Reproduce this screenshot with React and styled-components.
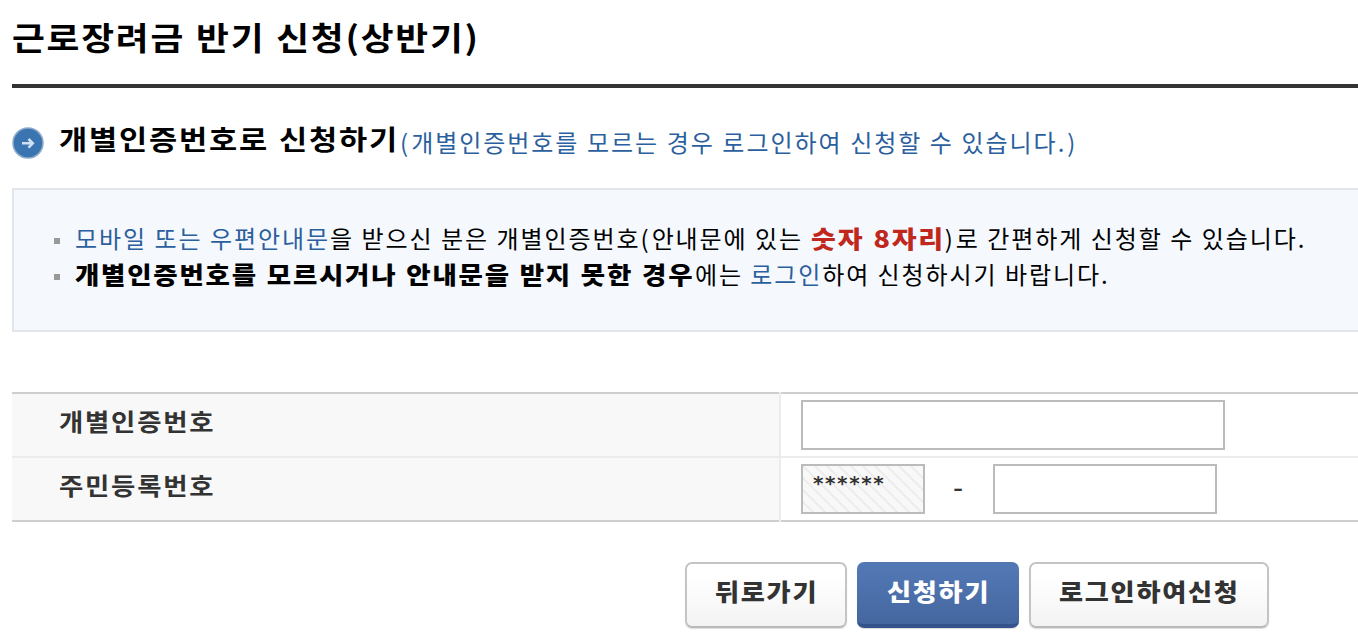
import React, { useState } from "react";
import styled, { createGlobalStyle } from "styled-components";

const GlobalStyle = createGlobalStyle`
  * {
    box-sizing: border-box;
  }
  body {
    margin: 0;
    background: #ffffff;
    overflow: hidden;
    font-family: "Noto Sans CJK KR", "Noto Sans", sans-serif;
  }
`;

const Page = styled.div`
  width: 1358px;
  height: 634px;
  padding-left: 12px;
  overflow: hidden;
  color: #000000;
`;

const Title = styled.h1`
  margin: 0;
  height: 88px;
  padding-top: 12px;
  border-bottom: 4px solid #333333;
  font-size: 32px;
  line-height: 48px;
  font-weight: bold;
  white-space: nowrap;
`;

// text run stretched horizontally, $width is the room it takes in the line
const Wide = styled.span`
  display: inline-block;
  width: ${(props) => props.$width}px;
  white-space: nowrap;
  letter-spacing: 1.6px;
  word-spacing: 1px;
  transform: scaleX(${(props) => props.$scale || 1.1});
  transform-origin: 0 50%;
`;

const SubTitle = styled.h2`
  display: flex;
  align-items: center;
  margin: 0;
  height: 100px;
  padding-top: 8px;
  font-size: 27px;
  line-height: 40px;
  font-weight: bold;
  white-space: nowrap;
`;

const SubTitleText = styled(Wide)`
  margin-top: -7px;
`;

const BulletIcon = styled.svg`
  width: 32px;
  height: 32px;
  margin: 2px 15px 0 0;
`;

const SubNote = styled.span`
  margin-top: -1px;
  font-size: 24px;
  font-weight: normal;
  letter-spacing: 1.95px;
  word-spacing: 0.3px;
  color: #2b5f9e;
`;

const Paren = styled.span`
  letter-spacing: 3px;
`;

const NoticeBox = styled.ul`
  margin: 0;
  padding: 30px 0 0 40px;
  height: 144px;
  list-style: none;
  border: 2px solid #e1e6ed;
  border-right: none;
  background: #f5f8fd;
`;

const NoticeItem = styled.li`
  display: flex;
  align-items: center;
  height: 36px;
  font-size: 24px;
  line-height: 36px;
  letter-spacing: 1.92px;
  word-spacing: ${(props) => props.$gap || 0}px;
  white-space: pre;
  &:before {
    content: "";
    width: 6px;
    height: 6px;
    margin: 5px 15px 0 0;
    background: #999999;
  }
`;

const Blue = styled.span`
  color: #2b5f9e;
`;

const Strong = styled(Wide)`
  font-weight: 900;
  color: ${(props) => props.$color || "#000000"};
`;

const FormTable = styled.div`
  margin-top: 60px;
  border-top: 2px solid #cfcfcf;
  border-bottom: 2px solid #cfcfcf;
`;

const FormRow = styled.div`
  display: grid;
  grid-template-columns: 767px 1fr;
  height: ${(props) => (props.$last ? 62 : 64)}px;
  border-bottom: ${(props) => (props.$last ? "none" : "2px solid #ececec")};
`;

const Label = styled.label`
  padding: 9px 0 0 47px;
  background: #f8f8f8;
  font-size: 24px;
  line-height: 36px;
  font-weight: bold;
  color: #333333;
`;

const Field = styled.div`
  display: flex;
  align-items: center;
  margin: -2px 0;
  padding-left: 20px;
  border-left: 2px solid #ececec;
`;

const Input = styled.input`
  width: ${(props) => props.$width}px;
  height: 50px;
  padding: 0 10px;
  border: 2px solid #bbbbbb;
  border-radius: 0;
  outline: none;
  background: #ffffff;
  font-size: 24px;
  color: #333333;
`;

const MaskedInput = styled(Input)`
  padding: 0 10px 12px 10px;
  font-family: "DejaVu Sans", sans-serif;
  font-size: 20px;
  font-weight: bold;
  letter-spacing: 1.6px;
  background: repeating-linear-gradient(
    45deg,
    #f8f8f8 0,
    #f8f8f8 5.6px,
    #ececec 6.6px,
    #ececec 7.6px,
    #f8f8f8 8.485px
  );
`;

const Dash = styled.span`
  width: 68px;
  margin-top: -2px;
  padding-right: 2px;
  text-align: center;
  font-family: "DejaVu Sans", sans-serif;
  font-size: 28px;
  color: #333333;
`;

const Buttons = styled.div`
  display: flex;
  gap: 10px;
  margin: 40px 0 0 673px;
`;

const Button = styled.button`
  width: ${(props) => props.$width}px;
  height: 66px;
  padding: 0 0 10px 28px;
  border: 2px solid #c4c4c4;
  border-bottom-color: #b9b9b9;
  border-radius: 7px;
  box-shadow: 0 1px 1px #dddddd;
  background: linear-gradient(#ffffff, #ffffff 20%, #f3f3f3);
  font-family: inherit;
  font-size: 24px;
  font-weight: 900;
  text-align: left;
  color: #333333;
`;

const PrimaryButton = styled(Button)`
  border: none;
  padding-left: 30px;
  border-bottom: 4px solid #33538a;
  padding-bottom: 6px;
  background: linear-gradient(#5379b5, #4567a0);
  color: #ffffff;
`;

const App = () => {
  const [code, setCode] = useState("");
  const [number, setNumber] = useState("");

  return (
    <Page>
      <GlobalStyle />
      <Title>
        <Wide $width={470} $scale={1.115}>근로장려금 반기 신청(상반기)</Wide>
      </Title>
      <SubTitle>
        <BulletIcon viewBox="0 0 32 32">
          <circle cx="16" cy="16" r="15" fill="#3a75b2" stroke="#8da9c8" strokeWidth="1.5" />
          <path d="M10 16.3h10M16.5 12l4.3 4.3-4.3 4.3" fill="none" stroke="#cfe1f3" strokeWidth="2.5" />
        </BulletIcon>
        <SubTitleText $width={341} $scale={1.135}>개별인증번호로 신청하기</SubTitleText>
        <SubNote>
          <Paren>(</Paren>개별인증번호를 모르는 경우 로그인하여 신청할 수 있습니다<Paren>.</Paren>)
        </SubNote>
      </SubTitle>
      <NoticeBox>
        <NoticeItem $gap={0.2}>
          <Blue>모바일 또는 우편안내문</Blue>
          <span>을 받으신 분은 개별인증번호<Paren>(</Paren>안내문에 있는 </span>
          <Strong $width={134} $scale={1.125} $color="#c0271d">숫자 8자리</Strong>
          <span><Paren>)</Paren>로 간편하게 신청할 수 있습니다.</span>
        </NoticeItem>
        <NoticeItem>
          <Strong $width={620} $scale={1.103}>개별인증번호를 모르시거나 안내문을 받지 못한 경우</Strong>
          <span>에는 </span>
          <Blue>로그인</Blue>
          <span>하여 신청하시기 바랍니다.</span>
        </NoticeItem>
      </NoticeBox>
      <FormTable>
        <FormRow>
          <Label htmlFor="code">
            <Wide $width={156}>개별인증번호</Wide>
          </Label>
          <Field>
            <Input id="code" $width={424} value={code} onChange={(e) => setCode(e.target.value)} />
          </Field>
        </FormRow>
        <FormRow $last>
          <Label htmlFor="number">
            <Wide $width={156}>주민등록번호</Wide>
          </Label>
          <Field>
            <MaskedInput $width={124} value="******" readOnly />
            <Dash>-</Dash>
            <Input id="number" $width={224} value={number} onChange={(e) => setNumber(e.target.value)} />
          </Field>
        </FormRow>
      </FormTable>
      <Buttons>
        <Button $width={162}>
          <Wide $width={104} $scale={1.09}>뒤로가기</Wide>
        </Button>
        <PrimaryButton $width={162}>
          <Wide $width={104} $scale={1.09}>신청하기</Wide>
        </PrimaryButton>
        <Button $width={240}>
          <Wide $width={182} $scale={1.09}>로그인하여신청</Wide>
        </Button>
      </Buttons>
    </Page>
  );
};

export default App;
